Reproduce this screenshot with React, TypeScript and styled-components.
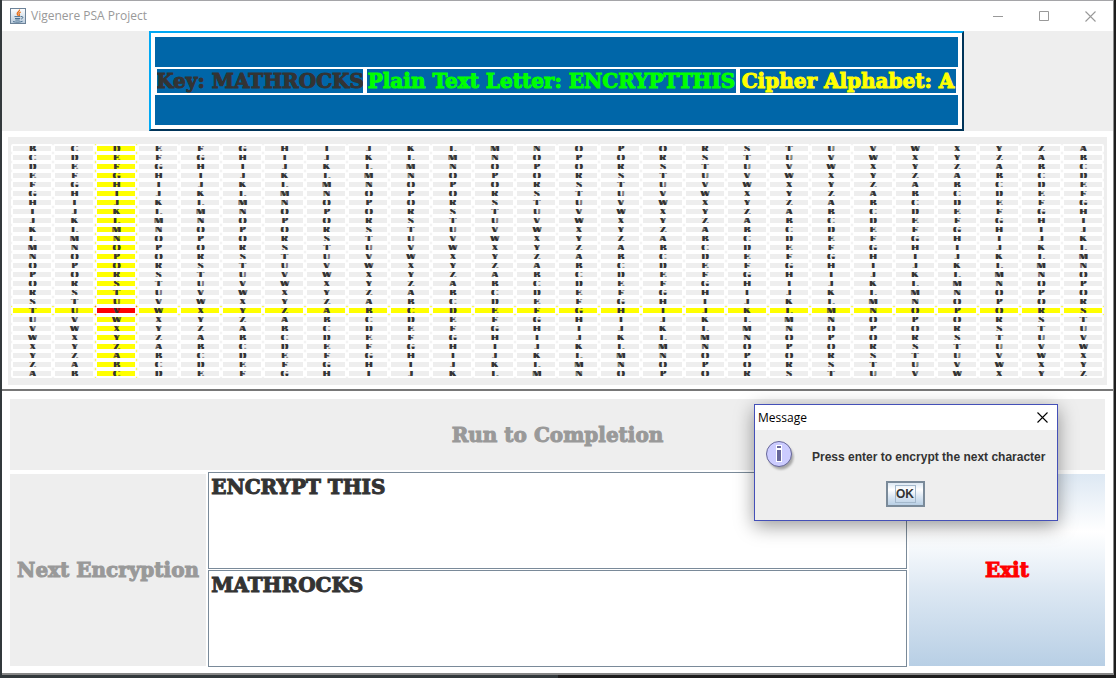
import React from 'react';
import styled, { createGlobalStyle, css } from 'styled-components';

const GlobalStyle = createGlobalStyle`
  *, *::before, *::after { box-sizing: border-box; }
  body { margin: 0; background: #24282a; }
`;

const display = css`
  font-family: 'DejaVu Serif', serif;
  font-weight: 700;
  -webkit-text-stroke: 1px currentColor;
`;

const Desktop = styled.div`
  display: flex;
  min-height: 100vh;
  padding: 0 2px 3px;
  background: linear-gradient(90deg, #33393c 0 50%, #1e1e1e 50%);
`;

const Window = styled.div`
  position: relative;
  flex: 1;
  min-width: 0;
  display: flex;
  flex-direction: column;
  border-top: 1px solid #a5a5a8;
  border-right: 1px solid #8a8a8a;
  background: #fff;
`;

const TitleBar = styled.header`
  display: flex;
  align-items: center;
  height: 30px;
  padding-left: 8px;
  background: #fff;
`;

const WindowTitle = styled.h1`
  flex: 1;
  margin: 0 0 0 5px;
  font: 400 12px/16px 'Open Sans', sans-serif;
  color: #999;
`;

const CaptionButton = styled.button`
  display: flex;
  align-items: center;
  justify-content: center;
  width: 46px;
  height: 28px;
  padding: 0;
  border: 0;
  background: transparent;
`;

const StatusBand = styled.section`
  height: 100px;
  padding: 0 149px 0 147px;
  background: #eee;
`;

const StatusFrame = styled.div`
  height: 100%;
  border: 2px solid;
  border-color: #00a8f3 #003459 #003459 #00a8f3;
  background: #fff;
  padding: 4px;
`;

const StatusFill = styled.div`
  display: flex;
  align-items: center;
  height: 100%;
  background: #0066a8;
`;

const StatusRow = styled.div`
  flex: 1;
  min-width: 0;
  display: grid;
  grid-template-columns: minmax(0, 210fr) minmax(0, 373fr) minmax(0, 220fr);
`;

const StatusLabel = styled.div<{ $color: string }>`
  ${display}
  display: flex;
  justify-content: center;
  height: 28px;
  overflow: hidden;
  border: 2px solid #fff;
  color: ${(p) => p.$color};
  font-size: 20px;
  line-height: 24px;
  white-space: nowrap;
`;

const GridFrame = styled.section`
  padding: 6px 6px 4px;
  border-bottom: 2px solid #777;
  background: #fff;
`;

const GridPanel = styled.div`
  padding: 7px 3px;
  background: #eee;
`;

const Square = styled.table`
  width: 100%;
  table-layout: fixed;
  border-collapse: collapse;
`;

const Cell = styled.td<{ $fill: string }>`
  height: 9px;
  padding: 0;
  background: ${(p) => p.$fill};
`;

const CellFace = styled.div`
  display: flex;
  align-items: center;
  justify-content: center;
  height: 9px;
  overflow: hidden;
  border: 2px solid #fff;
  border-radius: 2px;
  color: #333;
  font: 700 10px/10px 'Liberation Serif', serif;
  text-shadow: 1px 0 currentColor;
`;

const Controls = styled.main`
  flex: 1;
  display: grid;
  grid-template-columns: 196fr 698fr 196fr;
  grid-template-rows: 71px minmax(194px, 1fr);
  gap: 2px;
  padding: 8px 8px 6px;
  border-bottom: 2px solid #888;
`;

const SwingButton = styled.button<{ $wide?: boolean; $primary?: boolean }>`
  ${display}
  ${(p) => (p.$wide ? 'grid-column: 1 / -1;' : 'margin: 2px 0 1px;')}
  padding: 0;
  border: 0;
  background: ${(p) =>
    p.$primary ? 'linear-gradient(#dde8f3 0, #fff 30%, #dde8f3 60%, #b8cfe5 100%)' : '#eee'};
  color: ${(p) => (p.$primary ? '#f00' : '#999')};
  font-size: 20px;
  line-height: 24px;
  white-space: nowrap;
`;

const Fields = styled.div`
  display: flex;
  flex-direction: column;
  gap: 1px;
`;

const Field = styled.textarea`
  ${display}
  flex: 1;
  width: 100%;
  min-height: 0;
  padding: 2px;
  border: 1px solid #7a8a99;
  border-radius: 0;
  outline: 0;
  resize: none;
  background: #fff;
  color: #333;
  font-size: 20px;
  line-height: 24px;
`;

const Dialog = styled.div`
  position: absolute;
  top: 403px;
  right: 55px;
  width: 304px;
  border: 1px solid #4450b8;
  background: #eee;
  box-shadow: 0 5px 18px rgba(0, 0, 0, 0.4);
`;

const DialogTitle = styled.div`
  display: flex;
  align-items: center;
  justify-content: space-between;
  height: 25px;
  padding-left: 3px;
  background: #fff;
  color: #000;
  font: 400 12px/16px 'Open Sans', sans-serif;
`;

const DialogClose = styled(CaptionButton)`
  width: 30px;
  height: 25px;
`;

const DialogBody = styled.div`
  display: flex;
  align-items: center;
  gap: 17px;
  height: 51px;
  padding: 2px 0 0 10px;
  color: #333;
  font: 700 12px/16px 'Liberation Sans', sans-serif;
  white-space: nowrap;
`;

const DialogActions = styled.div`
  display: flex;
  justify-content: center;
  height: 39px;
  padding-right: 2px;
`;

const OkButton = styled.button`
  width: 39px;
  height: 26px;
  padding: 2px 8px;
  border: 2px solid #7a8a99;
  background: linear-gradient(#dde8f3 0, #fff 30%, #dde8f3 60%, #b8cfe5 100%);
  color: #333;
  font: 700 12px/16px 'Liberation Sans', sans-serif;
`;

const FocusRing = styled.span`
  display: block;
  outline: 1px solid #a3b8cc;
`;

const JavaIcon = () => (
  <svg width="16" height="16" viewBox="0 0 16 16" aria-hidden="true">
    <defs>
      <linearGradient id="tile" x1="0" y1="0" x2="0" y2="1">
        <stop offset="0" stopColor="#fff" />
        <stop offset="1" stopColor="#b9cbdc" />
      </linearGradient>
    </defs>
    <rect x="0.5" y="0.5" width="15" height="15" fill="url(#tile)" stroke="#6c8298" />
    <path d="M9.5 1.5c.6 1.8-2.8 2.6-2.3 4.3.2.7.9 1.2.8 2M10.8 4c-1.7.7-2.5 1.4-1.5 2.4.5.6.1 1.1-.4 1.5" fill="none" stroke="#e8701a" strokeWidth="1.3" />
    <path d="M4.5 8.6h6M5 10.5h5.2M5.3 12h4.4M3 13.6c3 .8 7 .7 9.5-.3M11 8.6c2.6-.6 2.3 1.9.2 2.4" fill="none" stroke="#4a7090" />
  </svg>
);

const Cross = ({ color }: { color: string }) => (
  <svg width="11" height="11" viewBox="0 0 11 11" aria-hidden="true">
    <path d="M.5.5l10 10M10.5.5l-10 10" stroke={color} strokeWidth="1.1" />
  </svg>
);

const InfoIcon = () => (
  <svg width="30" height="32" viewBox="0 0 30 32" aria-hidden="true">
    <defs>
      <filter id="soft" x="-20%" y="-20%" width="140%" height="140%">
        <feGaussianBlur stdDeviation="1.2" />
      </filter>
    </defs>
    <circle cx="16" cy="16" r="12.5" fill="#888" opacity=".7" filter="url(#soft)" />
    <circle cx="14" cy="13" r="12.5" fill="#ccf" stroke="#669" />
    <path d="M11 4h6v17h-6z" fill="#fff" />
    <path d="M12 5h4v2h-4zM12 9h4v11h-4z" fill="#669" />
  </svg>
);

const letters = Array.from('ABCDEFGHIJKLMNOPQRSTUVWXYZ');
const activeRow = 18;
const activeColumn = 2;

const fillFor = (row: number, column: number) => {
  if (row === activeRow && column === activeColumn) return '#f00';
  return row === activeRow || column === activeColumn ? '#ff0' : '#eee';
};

export default function App() {
  return (
    <Desktop>
      <GlobalStyle />
      <Window>
        <TitleBar>
          <JavaIcon />
          <WindowTitle>Vigenere PSA Project</WindowTitle>
          <CaptionButton aria-label="Minimize">
            <svg width="10" height="11" viewBox="0 0 10 11">
              <path d="M0 5.5h10" stroke="#999" />
            </svg>
          </CaptionButton>
          <CaptionButton aria-label="Maximize">
            <svg width="10" height="10" viewBox="0 0 10 10">
              <path d="M.5.5h9v9h-9z" fill="none" stroke="#999" />
            </svg>
          </CaptionButton>
          <CaptionButton aria-label="Close">
            <Cross color="#999" />
          </CaptionButton>
        </TitleBar>

        <StatusBand>
          <StatusFrame>
            <StatusFill>
              <StatusRow>
                <StatusLabel $color="#333">Key: MATHROCKS</StatusLabel>
                <StatusLabel $color="#0f0">Plain Text Letter: ENCRYPTTHIS</StatusLabel>
                <StatusLabel $color="#ff0">Cipher Alphabet: A</StatusLabel>
              </StatusRow>
            </StatusFill>
          </StatusFrame>
        </StatusBand>

        <GridFrame>
          <GridPanel>
            <Square aria-label="Vigenere square">
              <tbody>
                {letters.map((rowLetter, row) => (
                  <tr key={rowLetter}>
                    {letters.map((columnLetter, column) => (
                      <Cell key={columnLetter} $fill={fillFor(row, column)}>
                        <CellFace>{letters[(row + column + 1) % 26]}</CellFace>
                      </Cell>
                    ))}
                  </tr>
                ))}
              </tbody>
            </Square>
          </GridPanel>
        </GridFrame>

        <Controls>
          <SwingButton $wide disabled>Run to Completion</SwingButton>
          <SwingButton disabled>Next Encryption</SwingButton>
          <Fields>
            <Field aria-label="Plain text" defaultValue="ENCRYPT THIS" spellCheck={false} />
            <Field aria-label="Key" defaultValue="MATHROCKS" spellCheck={false} />
          </Fields>
          <SwingButton $primary>Exit</SwingButton>
        </Controls>

        <Dialog role="dialog" aria-label="Message">
          <DialogTitle>
            Message
            <DialogClose aria-label="Close message">
              <Cross color="#000" />
            </DialogClose>
          </DialogTitle>
          <DialogBody>
            <InfoIcon />
            Press enter to encrypt the next character
          </DialogBody>
          <DialogActions>
            <OkButton>
              <FocusRing>OK</FocusRing>
            </OkButton>
          </DialogActions>
        </Dialog>
      </Window>
    </Desktop>
  );
}
